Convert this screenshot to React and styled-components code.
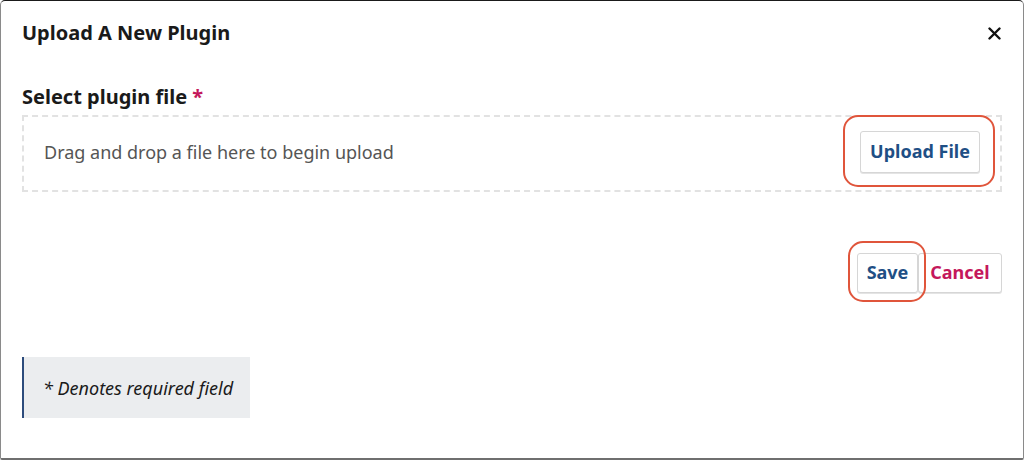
import React from "react";
import styled, { createGlobalStyle } from "styled-components";

const Global = createGlobalStyle`
	* {
		box-sizing: border-box;
		margin: 0;
		padding: 0;
	}
	html, body {
		width: 1024px;
		height: 460px;
		overflow: hidden;
		background: #ffffff;
		font-family: "Noto Sans", "Open Sans", sans-serif;
	}
`;

const Modal = styled.div`
	width: 1024px;
	height: 460px;
	display: flex;
	flex-direction: column;
	background: #ffffff;
	border: 1px solid #8a8a8a;
	border-top-color: #1a1a1a;
	border-bottom: 2px solid #6f6f6f;
	border-radius: 5px 5px 2px 2px;
	padding: 0 21px;
`;

const Header = styled.header`
	display: flex;
	justify-content: space-between;
	align-items: center;
	height: 66px;
`;

const Title = styled.h1`
	font-size: 20px;
	font-weight: 700;
	color: #1a1a1a;
	line-height: 27px;
	margin-top: -4px;
`;

const CloseButton = styled.button`
	border: none;
	background: none;
	width: 20px;
	height: 20px;
	display: flex;
	align-items: center;
	justify-content: center;
	margin-right: -2px;
	margin-top: -1px;
	cursor: pointer;
`;

const Label = styled.label`
	display: block;
	margin-top: 16px;
	font-size: 20px;
	font-weight: 700;
	color: #1a1a1a;
	line-height: 28px;
`;

const Required = styled.span`
	color: #c4185c;
`;

const DropZone = styled.div`
	margin-top: 4px;
	height: 77px;
	display: flex;
	align-items: center;
	justify-content: space-between;
	border: 2px dashed #e2e2e2;
	padding: 0 20px 3px;
`;

const DropText = styled.span`
	font-size: 18px;
	color: #555555;
`;

const Ring = styled.span`
	position: relative;
	display: inline-flex;

	&::after {
		content: "";
		position: absolute;
		inset: ${(p) => p.$inset};
		border: 2px solid #e0553b;
		border-radius: 15px;
		pointer-events: none;
	}
`;

const Button = styled.button`
	font-family: "Noto Sans", "Open Sans", sans-serif;
	font-size: 18px;
	font-weight: 700;
	color: ${(p) => (p.$danger ? "#c4185c" : "#1f4f85")};
	background: #ffffff;
	border: 1px solid #d6d6d6;
	border-radius: 3px;
	box-shadow: 0 1px 0 #e4e4e4;
	width: ${(p) => p.$w}px;
	height: ${(p) => p.$h}px;
	padding: 0 0 2px;
	cursor: pointer;
`;

const Actions = styled.div`
	display: flex;
	justify-content: flex-end;
	margin-top: 61px;
`;

const Note = styled.div`
	margin-top: 64px;
	width: 228px;
	height: 61px;
	display: flex;
	align-items: center;
	background: #ebedef;
	border-left: 2px solid #2d4c7c;
	padding-left: 19px;
	font-size: 18px;
	font-style: italic;
	color: #1a1a1a;
`;

export default function App() {
	return (
		<>
			<Global />
			<Modal>
				<Header>
					<Title>Upload A New Plugin</Title>
					<CloseButton aria-label="Close">
						<svg width="13" height="13" viewBox="0 0 13 13">
							<path d="M1.5 1.5 L11.5 11.5 M11.5 1.5 L1.5 11.5" stroke="#111" strokeWidth="2.4" strokeLinecap="round" />
						</svg>
					</CloseButton>
				</Header>
				<Label>
					Select plugin file <Required>*</Required>
				</Label>
				<DropZone>
					<DropText>Drag and drop a file here to begin upload</DropText>
					<Ring $inset="-16px -15px -14px -17px">
						<Button $w={120} $h={42}>Upload File</Button>
					</Ring>
				</DropZone>
				<Actions>
					<Ring $inset="-12px -8px -9px -9px">
						<Button $w={61} $h={40}>Save</Button>
					</Ring>
					<Button $danger $w={84} $h={40}>Cancel</Button>
				</Actions>
				<Note>* Denotes required field</Note>
			</Modal>
		</>
	);
}
